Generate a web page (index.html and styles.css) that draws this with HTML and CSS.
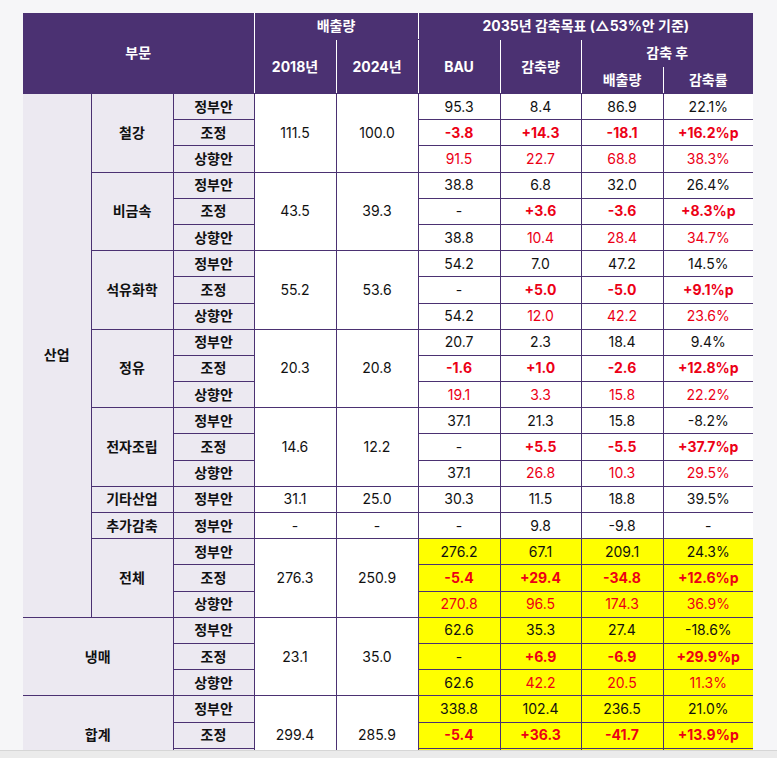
FILE: index.html
```html
<!DOCTYPE html>
<html lang="ko">
<head>
<meta charset="utf-8">
<title>2035년 감축목표</title>
<link rel="stylesheet" href="styles.css">
</head>
<body>
<div class="wrap">
<table class="tbl">
<colgroup>
<col class="c1"><col class="c2"><col class="c3">
<col class="cn"><col class="cn"><col class="cn"><col class="c7"><col class="cn"><col class="c9">
</colgroup>
<thead>
<tr>
<th colspan="3" rowspan="3">부문</th>
<th colspan="2">배출량</th>
<th colspan="4">2035년 감축목표 (△53%안 기준)</th>
</tr>
<tr>
<th rowspan="2">2018년</th>
<th rowspan="2">2024년</th>
<th rowspan="2">BAU</th>
<th rowspan="2">감축량</th>
<th colspan="2">감축 후</th>
</tr>
<tr>
<th class="sub">배출량</th>
<th class="sub">감축률</th>
</tr>
</thead>
<tbody>
<tr>
<td class="lbl" rowspan="20">산업</td>
<td class="lbl" rowspan="3">철강</td>
<td class="lbl">정부안</td>
<td rowspan="3">111.5</td><td rowspan="3">100.0</td>
<td>95.3</td><td>8.4</td><td>86.9</td><td>22.1%</td>
</tr>
<tr><td class="lbl">조정</td><td class="adj">-3.8</td><td class="adj">+14.3</td><td class="adj">-18.1</td><td class="adj">+16.2%p</td></tr>
<tr><td class="lbl">상향안</td><td class="up">91.5</td><td class="up">22.7</td><td class="up">68.8</td><td class="up">38.3%</td></tr>

<tr>
<td class="lbl" rowspan="3">비금속</td>
<td class="lbl">정부안</td>
<td rowspan="3">43.5</td><td rowspan="3">39.3</td>
<td>38.8</td><td>6.8</td><td>32.0</td><td>26.4%</td>
</tr>
<tr><td class="lbl">조정</td><td>-</td><td class="adj">+3.6</td><td class="adj">-3.6</td><td class="adj">+8.3%p</td></tr>
<tr><td class="lbl">상향안</td><td>38.8</td><td class="up">10.4</td><td class="up">28.4</td><td class="up">34.7%</td></tr>

<tr>
<td class="lbl" rowspan="3">석유화학</td>
<td class="lbl">정부안</td>
<td rowspan="3">55.2</td><td rowspan="3">53.6</td>
<td>54.2</td><td>7.0</td><td>47.2</td><td>14.5%</td>
</tr>
<tr><td class="lbl">조정</td><td>-</td><td class="adj">+5.0</td><td class="adj">-5.0</td><td class="adj">+9.1%p</td></tr>
<tr><td class="lbl">상향안</td><td>54.2</td><td class="up">12.0</td><td class="up">42.2</td><td class="up">23.6%</td></tr>

<tr>
<td class="lbl" rowspan="3">정유</td>
<td class="lbl">정부안</td>
<td rowspan="3">20.3</td><td rowspan="3">20.8</td>
<td>20.7</td><td>2.3</td><td>18.4</td><td>9.4%</td>
</tr>
<tr><td class="lbl">조정</td><td class="adj">-1.6</td><td class="adj">+1.0</td><td class="adj">-2.6</td><td class="adj">+12.8%p</td></tr>
<tr><td class="lbl">상향안</td><td class="up">19.1</td><td class="up">3.3</td><td class="up">15.8</td><td class="up">22.2%</td></tr>

<tr>
<td class="lbl" rowspan="3">전자조립</td>
<td class="lbl">정부안</td>
<td rowspan="3">14.6</td><td rowspan="3">12.2</td>
<td>37.1</td><td>21.3</td><td>15.8</td><td>-8.2%</td>
</tr>
<tr><td class="lbl">조정</td><td>-</td><td class="adj">+5.5</td><td class="adj">-5.5</td><td class="adj">+37.7%p</td></tr>
<tr><td class="lbl">상향안</td><td>37.1</td><td class="up">26.8</td><td class="up">10.3</td><td class="up">29.5%</td></tr>

<tr>
<td class="lbl">기타산업</td><td class="lbl">정부안</td>
<td>31.1</td><td>25.0</td><td>30.3</td><td>11.5</td><td>18.8</td><td>39.5%</td>
</tr>
<tr>
<td class="lbl">추가감축</td><td class="lbl">정부안</td>
<td>-</td><td>-</td><td>-</td><td>9.8</td><td>-9.8</td><td>-</td>
</tr>

<tr>
<td class="lbl" rowspan="3">전체</td>
<td class="lbl">정부안</td>
<td rowspan="3">276.3</td><td rowspan="3">250.9</td>
<td class="y">276.2</td><td class="y">67.1</td><td class="y">209.1</td><td class="y">24.3%</td>
</tr>
<tr><td class="lbl">조정</td><td class="y adj">-5.4</td><td class="y adj">+29.4</td><td class="y adj">-34.8</td><td class="y adj">+12.6%p</td></tr>
<tr><td class="lbl">상향안</td><td class="y up">270.8</td><td class="y up">96.5</td><td class="y up">174.3</td><td class="y up">36.9%</td></tr>

<tr>
<td class="lbl" colspan="2" rowspan="3">냉매</td>
<td class="lbl">정부안</td>
<td rowspan="3">23.1</td><td rowspan="3">35.0</td>
<td class="y">62.6</td><td class="y">35.3</td><td class="y">27.4</td><td class="y">-18.6%</td>
</tr>
<tr><td class="lbl">조정</td><td class="y">-</td><td class="y adj">+6.9</td><td class="y adj">-6.9</td><td class="y adj">+29.9%p</td></tr>
<tr><td class="lbl">상향안</td><td class="y">62.6</td><td class="y up">42.2</td><td class="y up">20.5</td><td class="y up">11.3%</td></tr>

<tr>
<td class="lbl" colspan="2" rowspan="3">합계</td>
<td class="lbl">정부안</td>
<td rowspan="3">299.4</td><td rowspan="3">285.9</td>
<td class="y">338.8</td><td class="y">102.4</td><td class="y">236.5</td><td class="y">21.0%</td>
</tr>
<tr><td class="lbl">조정</td><td class="y adj">-5.4</td><td class="y adj">+36.3</td><td class="y adj">-41.7</td><td class="y adj">+13.9%p</td></tr>
<tr><td class="lbl">상향안</td><td class="y up">333.4</td><td class="y up">138.7</td><td class="y up">194.8</td><td class="y up">34.9%</td></tr>
</tbody>
</table>
</div>
<div class="hbar"></div>
</body>
</html>
```

FILE: styles.css
```css
html, body {
  margin: 0;
  padding: 0;
  background: #f6f6f8;
}
body {
  font-family: Inter, "Noto Sans CJK KR", sans-serif;
  font-size: 14px;
  color: #111;
}
.wrap {
  padding: 13px 0 40px 23px;
}
.tbl {
  border-collapse: collapse;
  border-style: hidden;
  table-layout: fixed;
  width: 730px;
  background: #fff;
}
.c1 { width: 68px; }
.c2 { width: 82px; }
.c3 { width: 81px; }
.cn { width: 82px; }
.c7 { width: 81px; }
.c9 { width: 90px; }

.tbl th {
  background: #4b3172;
  color: #fff;
  font-weight: 700;
  border: 1px solid #fff;
  border-bottom-color: #4b3172;
  padding: 4px 4px;
  line-height: 18px;
  text-align: center;
}
.tbl th.sub {
  font-weight: 600;
}
.tbl td {
  border: 1px solid #4b3172;
  padding: 3.6px 4px;
  line-height: 18px;
  text-align: center;
  white-space: nowrap;
}
.tbl td.lbl {
  background: #ece9f1;
  font-weight: 700;
}
.tbl td.y {
  background: #ffff00;
}
.tbl td.adj {
  color: #ec0016;
  font-weight: 700;
}
.tbl td.up {
  color: #ec0016;
}
.hbar {
  position: fixed;
  left: 0;
  right: 0;
  bottom: 0;
  height: 7px;
  background: #ebebeb;
  border-top: 1px solid #d6d6d6;
}
```
